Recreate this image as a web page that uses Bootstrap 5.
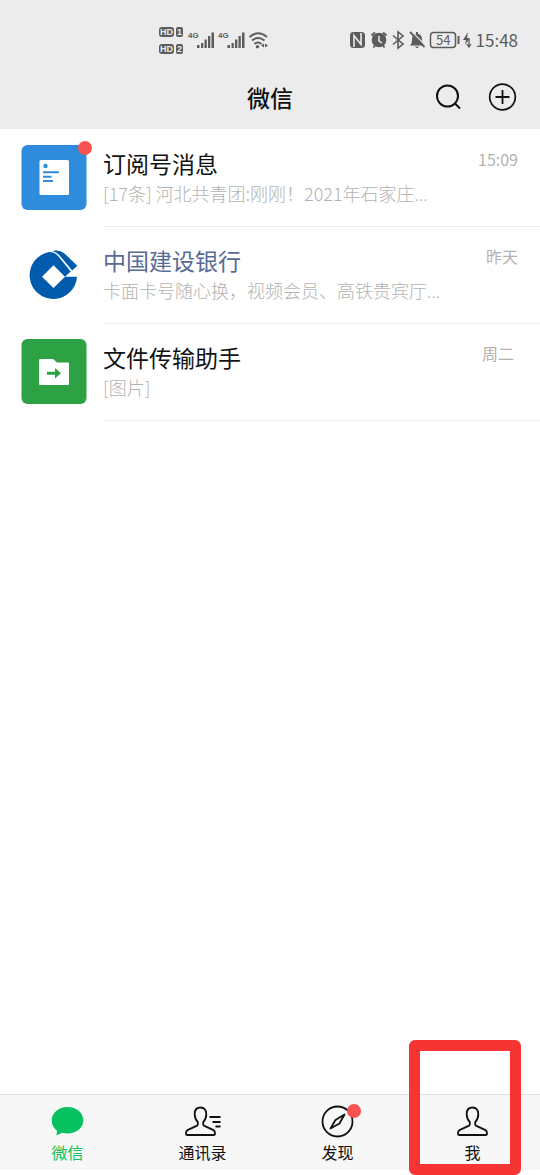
<!DOCTYPE html>
<html lang="zh-CN">
<head>
<meta charset="utf-8">
<meta name="viewport" content="width=device-width, initial-scale=1">
<title>微信</title>
<link href="https://cdn.jsdelivr.net/npm/bootstrap@5.3.0/dist/css/bootstrap.min.css" rel="stylesheet">
<style>
body{font-family:"Noto Sans CJK SC",sans-serif;background:#fff;color:#111}
svg{display:block;flex:none}
.topbar{background:#ececec;color:#111;height:129px}
.status{height:66px;padding:13px 22px 0 159px;color:#5c5c5c}
.status-time{font-size:17px;line-height:24px}
.hd-tag{font:bold 9px "Liberation Sans",sans-serif;fill:#ececec}
.net-tag{font:bold 8px "Liberation Sans",sans-serif;fill:#5c5c5c}
.bat-tag{font:13px "Noto Sans CJK SC",sans-serif;fill:#5c5c5c}
.titlebar{height:62px;padding-right:22px}
.titlebar h1{font-size:23px;line-height:32px;font-weight:500;left:0;right:0}
.icon-btn{background:none;border:0;padding:0;color:#111}
.chat{height:97px;padding:16px 0 0 21px;gap:16px;color:#111}
.avatar{width:66px;height:65px}
.dot{width:14px;height:14px;background:#fa5151;border-radius:50%}
.avatar .dot{top:-4px;right:-5px}
.chat-body{border-bottom:1px solid #ededed;height:82px;padding-right:22px}
.chat-name{font-size:23px;line-height:32px;font-weight:400;margin:2px 0 0}
.chat-name.service{color:#576b95}
.preview{font-size:18px;line-height:28px;color:#b2b2b2;font-weight:300}
.dots{font-family:"Noto Sans",sans-serif}
.when{font-size:16px;line-height:28px;color:#b2b2b2}
.tabs{background:#f7f7f7;border-top:1px solid #e0e0e0;height:76px;margin-bottom:5px}
.tab{color:#111;padding-top:9px;font-size:16px;line-height:24px}
.tab.active{color:#07c160}
.tab .dot{top:0;right:-6px}
.marker{border:11px solid #f73434;border-radius:6px;left:4px;right:19px;top:-55px;bottom:-5px;pointer-events:none}
</style>
</head>
<body>
<div class="d-flex flex-column min-vh-100">
  <header class="topbar">
    <div class="status d-flex justify-content-between align-items-center">
      <div class="d-flex align-items-center">
        <svg width="110" height="30" viewBox="0 0 110 30" fill="#5c5c5c">
          <rect y="2" width="15" height="10" rx="3"/><rect x="17" y="2" width="7" height="10" rx="2"/>
          <rect y="19" width="15" height="10" rx="3"/><rect x="17" y="19" width="7" height="10" rx="2"/>
          <text class="hd-tag" x="1" y="10">HD</text><text class="hd-tag" x="18" y="10">1</text>
          <text class="hd-tag" x="1" y="27">HD</text><text class="hd-tag" x="18" y="27">2</text>
          <text class="net-tag" x="29" y="13">4G</text><text class="net-tag" x="59" y="13">4G</text>
          <path d="M38 20h2.500v3H38zM42 18h2.300v5H42zM45.500 14.500h2.300v8.500h-2.300zM49 11h2.300v12H49zM52.500 7.500H55V23h-2.500zM68.500 20H71v3h-2.500zM72.500 18h2.300v5h-2.300zM76 14.500h2.300V23H76zM79.500 11h2.300v12h-2.300zM83 7.500h2.500V23H83z"/>
          <g fill="none" stroke="#5c5c5c" stroke-width="2"><path d="M90.500 12Q99 4.500 108 12M93 15.500q6-5 12.500 0M95.500 19q3.500-3 7 0"/></g>
          <circle cx="98.500" cy="21.800" r="1.700"/><path d="M105 18.500v4l-3-2zM106 18.500v4l3-2z"/>
        </svg>
      </div>
      <div class="d-flex align-items-center gap-1">
        <svg width="122" height="24" viewBox="0 0 122 24" fill="none" stroke="#5c5c5c">
          <rect y="4" width="15" height="16" rx="3.500" fill="#5c5c5c" stroke="none"/><path d="M4 19V7.500L11 16.500V5" stroke="#ececec" stroke-width="1.600"/>
          <circle cx="29" cy="12" r="7.300" fill="#5c5c5c" stroke="none"/><path d="M29 8v5l3 2" stroke="#ececec" stroke-width="1.500"/><path d="M21.500 7.500l3.500-3M33 4.500l3.500 3M25 17.500l-1.500 2M33 17.500l1.500 2" stroke-width="2"/>
          <path d="M43 7.500l10 8.500-5 4V4l5 4-10 8.500" stroke-width="1.600"/>
          <path d="M59.500 17.500q2.500-1 2.500-6 0-5 4-5.500V4h2v2q4 .5 4 5.500t2.500 6zM65 18.500h4q-2 3-4 0z" fill="#5c5c5c" stroke="none"/><path d="M61.500 3.500l14 14" stroke="#ececec" stroke-width="1.300"/><path d="M60 4l14.500 15" stroke-width="1.800"/>
          <rect x="80.500" y="4.500" width="25" height="15" rx="3" stroke-width="1.500"/><path d="M108.500 8v8" stroke-width="2"/>
          <text class="bat-tag" stroke="none" x="86" y="17">54</text>
          <path d="M118 4l-5 8h3l-1 5 5-7h-3z" fill="#5c5c5c" stroke="none"/><path d="M119 11v7m-2-2l2 3 2-3" stroke-width="1.300"/>
        </svg>
        <span class="status-time">15:48</span>
      </div>
    </div>
    <div class="titlebar position-relative d-flex justify-content-end align-items-center">
      <h1 class="position-absolute text-center m-0">微信</h1>
      <div class="d-flex align-items-center position-relative gap-4">
        <button class="icon-btn" type="button" aria-label="搜索"><svg width="30" height="30" viewBox="0 0 30 30" fill="none" stroke="currentColor" stroke-width="2"><circle cx="13.500" cy="14" r="10.500"/><path d="M21 21.500l5 5"/></svg></button>
        <button class="icon-btn" type="button" aria-label="添加"><svg width="30" height="30" viewBox="0 0 30 30" fill="none" stroke="currentColor"><circle cx="14.500" cy="15" r="12.800" stroke-width="1.700"/><path d="M14.500 8v14M7.500 15h14" stroke-width="1.800"/></svg></button>
      </div>
    </div>
  </header>

  <main>
    <a href="#subscriptions" class="chat d-flex text-decoration-none">
      <div class="avatar position-relative flex-shrink-0">
        <svg width="66" height="65" viewBox="0 0 66 65"><rect x=".5" width="65" height="65" rx="6" fill="#2f8bdb"/><rect x="18.500" y="15" width="29.500" height="35" rx="1.500" fill="#fff"/><circle cx="24.500" cy="21" r="2.200" fill="#2f8bdb"/><path d="M22 27.300h16M22 31.700h8.500M22 36h10" stroke="#2f8bdb" stroke-width="2"/></svg>
        <span class="dot position-absolute"></span>
      </div>
      <div class="chat-body d-flex flex-grow-1 justify-content-between">
        <div><h2 class="chat-name">订阅号消息</h2><div class="preview">[17条] 河北共青团:刚刚！2021年石家庄<span class="dots">…</span></div></div>
        <time class="when">15:09</time>
      </div>
    </a>
    <a href="#bank" class="chat d-flex text-decoration-none">
      <div class="avatar flex-shrink-0">
        <svg width="66" height="65" viewBox="0 0 66 65" fill="#005bac"><path d="M28 10Q34 10 37.500 14.500L49.700 29.500 44 34.700 32.500 23.300 21 34.700 32.500 46 44 34.700H56A23.700 23.700 0 1 1 28 10z"/><path d="M31 9.300Q38 7 43.500 11.500L56.300 23.700 51.200 28.500 39.500 14.500Q36 10 31 9.300z"/></svg>
      </div>
      <div class="chat-body d-flex flex-grow-1 justify-content-between">
        <div><h2 class="chat-name service">中国建设银行</h2><div class="preview">卡面卡号随心换，视频会员、高铁贵宾厅<span class="dots">…</span></div></div>
        <time class="when">昨天</time>
      </div>
    </a>
    <a href="#files" class="chat d-flex text-decoration-none">
      <div class="avatar flex-shrink-0">
        <svg width="66" height="65" viewBox="0 0 66 65"><rect x=".5" width="65" height="65" rx="6" fill="#2ca245"/><path d="M19.500 20H32l4 3.500h11q1 0 1 1V45q0 1-1 1H19q-1 0-1-1V21q0-1 1.500-1z" fill="#fff"/><path d="M26 32.700h8V29l6 5.200-6 5.200v-3.700h-8z" fill="#2ca245"/></svg>
      </div>
      <div class="chat-body d-flex flex-grow-1 justify-content-between">
        <div><h2 class="chat-name">文件传输助手</h2><div class="preview">[图片]</div></div>
        <time class="when pe-1">周二</time>
      </div>
    </a>
  </main>

  <nav class="tabs mt-auto">
    <div class="row g-0 h-100">
      <a href="#chats" class="tab active col-3 d-flex flex-column align-items-center text-decoration-none" aria-current="page">
        <svg width="34" height="36" viewBox="0 0 34 36"><path d="M16.500 3C7.500 3 .7 9 .7 16.500c0 4.300 2 7.800 5.300 10.300L5.500 31.500l5.500-2.700q2.700.8 5.500.8c9 0 15.800-5.800 15.800-13.300S25.500 3 16.500 3z" fill="#07c160"/></svg>
        <span>微信</span>
      </a>
      <a href="#contacts" class="tab col-3 d-flex flex-column align-items-center text-decoration-none">
        <svg width="36" height="36" viewBox="0 0 36 36" fill="none" stroke="currentColor" stroke-width="1.800" stroke-linejoin="round"><path d="M15.500 3.500c-3.900 0-5.800 2.800-5.800 6.400 0 3.200 1 6 3.100 8.300v2q0 1.100-1.200 1.700L3 25.900q-2 1-2 3v1.200q0 .9.900.9h27.200q.9 0 .9-.9v-1.200q0-2-2-3l-8.600-4q-1.200-.6-1.200-1.700v-2c2.100-2.300 3.100-5.100 3.100-8.300 0-3.600-1.900-6.400-5.800-6.400z"/><path d="M24.500 13H35.500M27.500 18h8M30.500 22.500h5"/></svg>
        <span>通讯录</span>
      </a>
      <a href="#discover" class="tab col-3 d-flex flex-column align-items-center text-decoration-none">
        <span class="position-relative"><svg width="34" height="36" viewBox="0 0 34 36" fill="none" stroke="currentColor" stroke-width="1.800"><circle cx="16.500" cy="17.500" r="15"/><path d="M23.500 10.500l-9 5.500L9.500 24.500l9-5z" stroke-linejoin="round"/></svg><i class="dot position-absolute"></i></span>
        <span>发现</span>
      </a>
      <a href="#me" class="tab col-3 d-flex flex-column align-items-center text-decoration-none position-relative">
        <svg width="32" height="36" viewBox="0 0 32 36" fill="none" stroke="currentColor" stroke-width="1.800" stroke-linejoin="round"><path d="M15.500 3.500c-3.900 0-5.800 2.800-5.800 6.400 0 3.200 1 6 3.100 8.300v2q0 1.100-1.200 1.700L3 25.900q-2 1-2 3v1.200q0 .9.900.9h27.200q.9 0 .9-.9v-1.200q0-2-2-3l-8.600-4q-1.200-.6-1.200-1.700v-2c2.100-2.300 3.100-5.100 3.100-8.300 0-3.600-1.900-6.400-5.800-6.400z"/></svg>
        <span>我</span>
        <span class="marker position-absolute"></span>
      </a>
    </div>
  </nav>
</div>
<script src="https://cdn.jsdelivr.net/npm/bootstrap@5.3.0/dist/js/bootstrap.bundle.min.js"></script>
</body>
</html>
